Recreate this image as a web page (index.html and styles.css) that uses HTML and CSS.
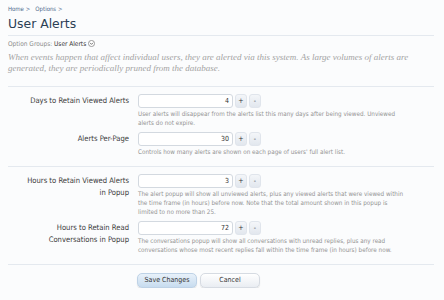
FILE: index.html
```html
<!DOCTYPE html>
<html>
<head>
<meta charset="utf-8">
<link rel="stylesheet" href="styles.css">
</head>
<body>
<div class="page">
  <div class="crumbs"><a>Home</a> &gt; &nbsp; <a>Options</a> &gt;</div>
  <h1 class="title">User Alerts</h1>
  <div class="groups">Option Groups: <span class="grp">User Alerts</span> <span class="chev"><svg width="7" height="7" viewBox="0 0 8 8"><circle cx="4" cy="4" r="3.5" fill="#fff" stroke="#777" stroke-width="0.8"/><path d="M2.3 3.2 L4 5 L5.7 3.2" fill="none" stroke="#555" stroke-width="0.9"/></svg></span></div>
  <p class="desc">When events happen that affect individual users, they are alerted via this system. As large volumes of alerts are generated, they are periodically pruned from the database.</p>

  <div class="section">
    <div class="row">
      <div class="label">Days to Retain Viewed Alerts</div>
      <div class="ctrl">
        <div class="spin"><span class="input">4</span><span class="btn">+</span><span class="btn">-</span></div>
        <div class="help">User alerts will disappear from the alerts list this many days after being viewed. Unviewed alerts do not expire.</div>
      </div>
    </div>
    <div class="row">
      <div class="label">Alerts Per-Page</div>
      <div class="ctrl">
        <div class="spin"><span class="input">30</span><span class="btn">+</span><span class="btn">-</span></div>
        <div class="help">Controls how many alerts are shown on each page of users' full alert list.</div>
      </div>
    </div>
  </div>

  <div class="section">
    <div class="row">
      <div class="label">Hours to Retain Viewed Alerts in Popup</div>
      <div class="ctrl">
        <div class="spin"><span class="input">3</span><span class="btn">+</span><span class="btn">-</span></div>
        <div class="help">The alert popup will show all unviewed alerts, plus any viewed alerts that were viewed within the time frame (in hours) before now. Note that the total amount shown in this popup is limited to no more than 25.</div>
      </div>
    </div>
    <div class="row">
      <div class="label">Hours to Retain Read Conversations in Popup</div>
      <div class="ctrl">
        <div class="spin"><span class="input">72</span><span class="btn">+</span><span class="btn">-</span></div>
        <div class="help">The conversations popup will show all conversations with unread replies, plus any read conversations whose most recent replies fall within the time frame (in hours) before now.</div>
      </div>
    </div>
  </div>

  <div class="actions">
    <span class="button primary">Save Changes</span>
    <span class="button">Cancel</span>
  </div>
</div>
</body>
</html>
```

FILE: styles.css
```css
html, body {
  margin: 0;
  padding: 0;
  background: #fbfcfd;
}
.page {
  padding: 4px 8px 0 8px;
  width: 426px;
  font-family: "DejaVu Sans Condensed", "DejaVu Sans", sans-serif;
  color: #333;
}
.crumbs {
  font-size: 6px;
  color: #4b6a8c;
  height: 9px;
  line-height: 9px;
}
.crumbs a { color: #4b6a8c; }
.title {
  margin: 2px 0 0 0;
  font-family: "DejaVu Sans", sans-serif;
  font-weight: normal;
  font-size: 12.4px;
  line-height: 18px;
  color: #2b3f55;
  padding-bottom: 2px;
  border-bottom: 1px solid #e4e9ef;
}
.groups {
  margin-top: 4px;
  font-size: 6.5px;
  color: #8c8c8c;
  line-height: 9px;
}
.groups .grp { color: #333; }
.chev svg { vertical-align: -1px; }
.desc {
  margin: 3px 0 0 0;
  font-family: "Liberation Serif", serif;
  font-style: italic;
  font-size: 9px;
  line-height: 11px;
  color: #a3a3a3;
  padding-bottom: 12px;
  border-bottom: 1px solid #e4e9ef;
}
.section {
  padding: 7px 0 10px 0;
  border-bottom: 1px solid #e4e9ef;
  display: flex;
  flex-direction: column;
  gap: 5px;
}
.row {
  display: flex;
  gap: 9px;
  padding-left: 15px;
}
.label {
  width: 106px;
  text-align: right;
  font-size: 7.6px;
  line-height: 12px;
  color: #3a3a3a;
  padding-top: 1px;
}
.ctrl {
  flex: 1;
}
.spin {
  display: flex;
  gap: 2px;
  align-items: center;
  height: 14px;
}
.input {
  width: 90px;
  height: 12px;
  border: 1px solid #d3d9e0;
  border-radius: 3px;
  background: #fff;
  font-size: 7px;
  line-height: 12px;
  text-align: right;
  padding-right: 3px;
  color: #333;
}
.btn {
  width: 10px;
  height: 12px;
  border-radius: 3px;
  background: linear-gradient(#f4f6f9, #e2e7ee);
  border: 1px solid #e0e5ec;
  font-size: 7px;
  line-height: 12px;
  text-align: center;
  color: #333;
}
.help {
  margin-top: 1px;
  font-size: 6.3px;
  line-height: 9px;
  color: #939393;
  width: 267px;
}
.actions {
  display: flex;
  gap: 3px;
  padding: 8px 0 0 129px;
}
.button {
  width: 58px;
  height: 13px;
  border-radius: 5px;
  border: 1px solid #d6dbe2;
  background: linear-gradient(#ffffff, #e9edf2);
  font-size: 7px;
  line-height: 13px;
  text-align: center;
  color: #333;
  box-shadow: 0 1px 1px rgba(0,0,0,0.12);
}
.button.primary {
  background: linear-gradient(#e8f1fa, #c7dcef);
  border-color: #bed2e6;
}
```
